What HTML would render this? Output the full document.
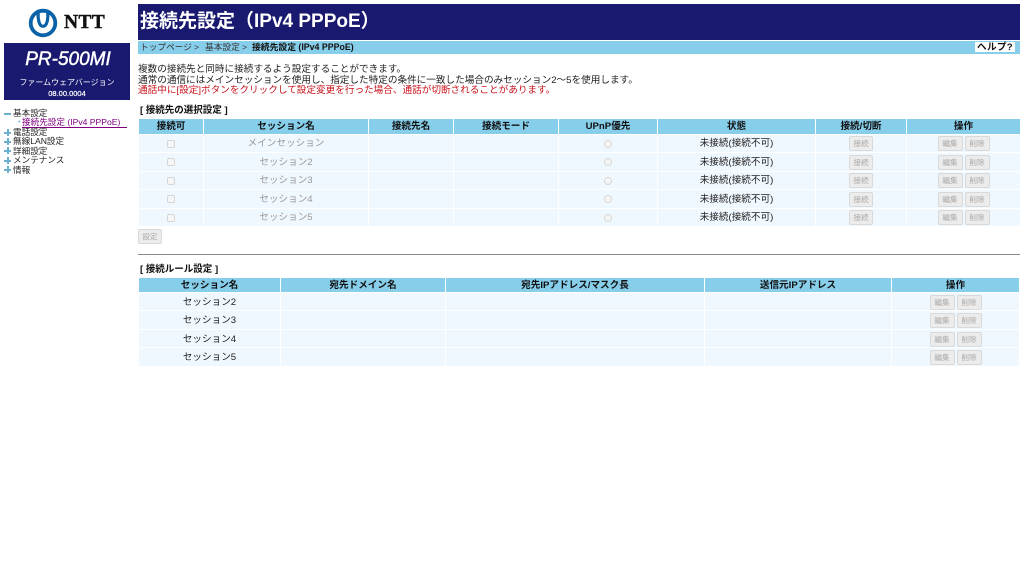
<!DOCTYPE html>
<html lang="ja"><head><meta charset="utf-8"><title>接続先設定</title>
<style>
html,body{margin:0;padding:0;background:#fff;width:1024px;height:576px;overflow:hidden}
body{font-family:"Liberation Sans","Noto Sans CJK JP",sans-serif;font-size:9.62px;color:#111;position:relative}
#w{position:absolute;left:0;top:0;width:1024px;height:576px;background:#fff;filter:blur(.35px)}
.a{position:absolute;white-space:nowrap;line-height:11px}
.side{font-size:8.6px;left:13px;color:#222}
.grid{position:absolute;display:grid;gap:1px;left:139px}
.grid>div{background:#f0f8ff;display:flex;align-items:center;justify-content:center;gap:2px;font-size:9.6px;line-height:11px;white-space:nowrap;min-width:0;overflow:hidden;padding-top:.6px;color:#222}
.t2>div{padding-top:1.6px}
.grid>div.h{background:#87ceeb;font-weight:bold;color:#111;padding-top:0}
.grid>div.g{color:#999}
.btn{display:inline-block;box-sizing:border-box;width:25px;height:15px;background:#ececec;border:1px solid #d9d9d9;border-radius:2px;color:#aaa;font-size:7.6px;line-height:13px;text-align:center}
.one{width:24px}
.cb{display:inline-block;box-sizing:border-box;width:8px;height:8px;border:1px solid #d6d6d6;border-radius:2px;background:#f6f6f6}
.rd{display:inline-block;box-sizing:border-box;width:8px;height:8px;border:1px solid #d6d6d6;border-radius:50%;background:#f6f6f6}
.plus{position:absolute;left:4px;width:7px;height:7px}
.plus:before{content:"";position:absolute;left:0;right:0;top:2.5px;height:2px;background:#6db0cf}
.plus.p:after{content:"";position:absolute;top:0;bottom:0;left:2.5px;width:2px;background:#6db0cf}
</style></head><body><div id="w">

<svg class="a" style="left:27px;top:8px" width="32" height="30" viewBox="0 0 32 30">
<circle cx="16" cy="15" r="12.3" fill="none" stroke="#0a62a8" stroke-width="3.8"/>
<path d="M11.2 4.5C10.8 9 11.5 18.3 16 18.3S21.2 9 20.8 4.5" fill="none" stroke="#0a62a8" stroke-width="3.2"/>
</svg>
<div class="a" style="left:64px;top:13px;font:bold 19.5px/20px 'Liberation Serif',serif;color:#111;-webkit-text-stroke:.4px #111;letter-spacing:.3px">NTT</div>

<div class="a" style="left:4px;top:43px;width:126px;height:57px;background:#191970;color:#fff;text-align:center">
<div class="a" style="left:1px;width:126px;top:6px;font:italic 19px/22px 'Liberation Sans',sans-serif;-webkit-text-stroke:.45px #fff">PR-500MI</div>
<div class="a" style="left:0;width:126px;top:34px;font-size:8px">ファームウェアバージョン</div>
<div class="a" style="left:0;width:126px;top:45px;font-size:7.5px;-webkit-text-stroke:.2px #fff">08.00.0004</div>
</div>

<i class="plus" style="top:110px"></i>
<div class="a side" style="top:108px">基本設定</div>
<div class="a" style="left:15px;top:117px;font-size:8.6px;color:#6db0cf">・</div>
<div class="a" style="left:22px;top:117px;font-size:8.6px;color:#800080;width:105px;height:10px;border-bottom:1px solid #800080">接続先設定 (IPv4 PPPoE)</div>
<i class="plus p" style="top:129px"></i>
<div class="a side" style="top:127px">電話設定</div>
<i class="plus p" style="top:138px"></i>
<div class="a side" style="top:136px">無線LAN設定</div>
<i class="plus p" style="top:147px"></i>
<div class="a side" style="top:146px">詳細設定</div>
<i class="plus p" style="top:157px"></i>
<div class="a side" style="top:155px">メンテナンス</div>
<i class="plus p" style="top:166px"></i>
<div class="a side" style="top:165px">情報</div>

<div class="a" style="left:138px;top:4px;width:882px;height:36px;background:#191970"></div>
<div class="a" style="left:140px;top:10px;font-size:19px;line-height:23px;font-weight:bold;color:#fff">接続先設定（IPv4 PPPoE）</div>
<div class="a" style="left:138px;top:41px;width:882px;height:13px;background:#87ceeb"></div>
<div class="a" style="left:140px;top:42px;color:#333;font-size:8.7px">トップページ</div>
<div class="a" style="left:194px;top:42px;color:#333;font-size:8.7px">&gt;</div>
<div class="a" style="left:205px;top:42px;color:#333;font-size:8.7px">基本設定</div>
<div class="a" style="left:242px;top:42px;color:#333;font-size:8.7px">&gt;</div>
<div class="a" style="left:252px;top:42px;color:#111;font-size:8.8px;font-weight:bold">接続先設定 (IPv4 PPPoE)</div>
<div class="a" style="left:975px;top:42px;width:40px;height:10px;background:#fff;font-weight:bold;text-align:center;line-height:11px;letter-spacing:.3px">ヘルプ?</div>

<div class="a" style="left:138px;top:64px;color:#222">複数の接続先と同時に接続するよう設定することができます。</div>
<div class="a" style="left:138px;top:74.5px;color:#222">通常の通信にはメインセッションを使用し、指定した特定の条件に一致した場合のみセッション2～5を使用します。</div>
<div class="a" style="left:138px;top:85px;color:#c8141e">通話中に[設定]ボタンをクリックして設定変更を行った場合、通話が切断されることがあります。</div>

<div class="a" style="left:140px;top:105px;font-weight:bold;font-size:9.5px">[ 接続先の選択設定 ]</div>

<div class="grid" style="top:119px;grid-template-columns:64px 164px 84px 104px 98px 157px 90px 113px;grid-template-rows:15px repeat(5,17.4px)">
<div class="h">接続可</div><div class="h">セッション名</div><div class="h">接続先名</div><div class="h">接続モード</div><div class="h">UPnP優先</div><div class="h">状態</div><div class="h">接続/切断</div><div class="h">操作</div>

<div><i class="cb"></i></div><div class="g">メインセッション</div><div></div><div></div><div><i class="rd"></i></div><div>未接続(接続不可)</div><div><span class="btn one">接続</span></div><div><span class="btn">編集</span><span class="btn">削除</span></div>
<div><i class="cb"></i></div><div class="g">セッション2</div><div></div><div></div><div><i class="rd"></i></div><div>未接続(接続不可)</div><div><span class="btn one">接続</span></div><div><span class="btn">編集</span><span class="btn">削除</span></div>
<div><i class="cb"></i></div><div class="g">セッション3</div><div></div><div></div><div><i class="rd"></i></div><div>未接続(接続不可)</div><div><span class="btn one">接続</span></div><div><span class="btn">編集</span><span class="btn">削除</span></div>
<div><i class="cb"></i></div><div class="g">セッション4</div><div></div><div></div><div><i class="rd"></i></div><div>未接続(接続不可)</div><div><span class="btn one">接続</span></div><div><span class="btn">編集</span><span class="btn">削除</span></div>
<div><i class="cb"></i></div><div class="g">セッション5</div><div></div><div></div><div><i class="rd"></i></div><div>未接続(接続不可)</div><div><span class="btn one">接続</span></div><div><span class="btn">編集</span><span class="btn">削除</span></div>
</div>

<span class="btn one a" style="left:138px;top:229px;line-height:13px">設定</span>

<div class="a" style="left:138px;top:253.5px;width:882px;height:1.5px;background:#8a8a8a"></div>

<div class="a" style="left:140px;top:264px;font-weight:bold;font-size:9.5px">[ 接続ルール設定 ]</div>

<div class="grid t2" style="top:278px;grid-template-columns:141px 164px 258px 186px 127px;grid-template-rows:14px repeat(4,17.4px)">
<div class="h">セッション名</div><div class="h">宛先ドメイン名</div><div class="h">宛先IPアドレス/マスク長</div><div class="h">送信元IPアドレス</div><div class="h">操作</div>
<div>セッション2</div><div></div><div></div><div></div><div><span class="btn">編集</span><span class="btn">削除</span></div>
<div>セッション3</div><div></div><div></div><div></div><div><span class="btn">編集</span><span class="btn">削除</span></div>
<div>セッション4</div><div></div><div></div><div></div><div><span class="btn">編集</span><span class="btn">削除</span></div>
<div>セッション5</div><div></div><div></div><div></div><div><span class="btn">編集</span><span class="btn">削除</span></div>
</div>

</div></body></html>
